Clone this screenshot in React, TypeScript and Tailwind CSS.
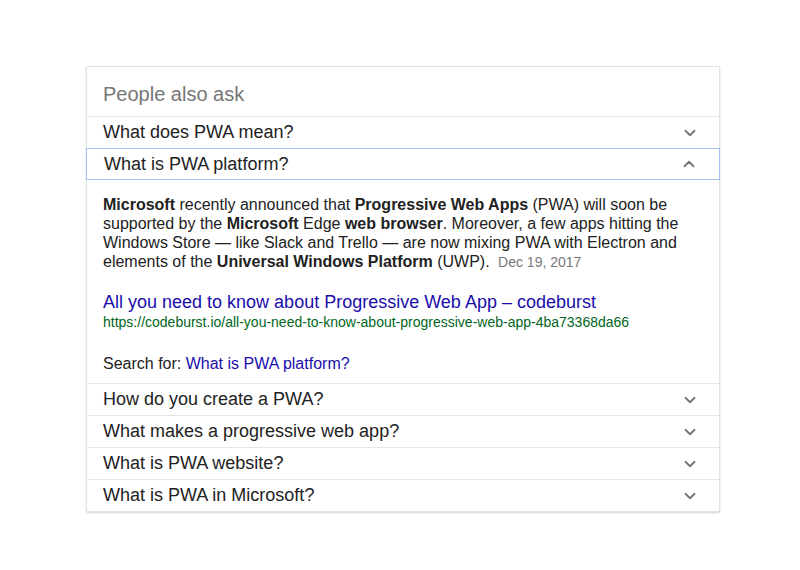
import { ChevronDown, ChevronUp } from 'lucide-react'

const before = ['What does PWA mean?']
const after = [
  'How do you create a PWA?',
  'What makes a progressive web app?',
  'What is PWA website?',
  'What is PWA in Microsoft?',
]

function Row({ q }: { q: string }) {
  return (
    <div className="h-[32px] border-t border-[#e6e6e6] pl-4 pr-[20px] flex items-center justify-between text-[18px] text-[#222]">
      <span>{q}</span>
      <ChevronDown size={18} strokeWidth={2.4} className="text-[#70757a]" />
    </div>
  )
}

export default function App() {
  return (
    <div className="min-h-[570px] bg-white pt-[66px] pl-[86px] font-[family-name:Liberation_Sans,Arial,sans-serif]">
      <div className="w-[634px] border border-[#e2e2e2] rounded-[2px] shadow-[0_1px_2px_rgba(0,0,0,0.18)] bg-white">
        <div className="h-[49px] pl-4 pt-[4px] flex items-center text-[20px] text-[#767676]">
          People also ask
        </div>
        {before.map((q) => (
          <Row key={q} q={q} />
        ))}
        <div className="h-[32px] border border-[#a1c0f7] -mx-px pl-[17px] pr-[21px] flex items-center justify-between text-[18px] text-[#222]">
          <span>What is PWA platform?</span>
          <ChevronUp size={18} strokeWidth={2.4} className="text-[#70757a]" />
        </div>
        <div className="px-4 pt-[15px] pb-[10px] text-[16px] text-[#222]">
          <p className="leading-[19px]">
            <b>Microsoft</b> recently announced that <b>Progressive Web Apps</b> (PWA) will soon be
            supported by the <b>Microsoft</b> Edge <b>web browser</b>. Moreover, a few apps hitting the
            Windows Store — like Slack and Trello — are now mixing PWA with Electron and elements of
            the <b>Universal Windows Platform</b> (UWP).{' '}
            <span className="ml-1 text-[14px] text-[#777]">Dec 19, 2017</span>
          </p>
          <div className="mt-[19px] text-[18px] leading-[22px] text-[#1a0dab]">
            All you need to know about Progressive Web App – codeburst
          </div>
          <div className="text-[14px] leading-[18px] text-[#006621]">
            https://codeburst.io/all-you-need-to-know-about-progressive-web-app-4ba73368da66
          </div>
          <div className="mt-[23px] leading-[19px]">
            Search for: <span className="text-[#1a0dab]">What is PWA platform?</span>
          </div>
        </div>
        {after.map((q) => (
          <Row key={q} q={q} />
        ))}
      </div>
    </div>
  )
}
